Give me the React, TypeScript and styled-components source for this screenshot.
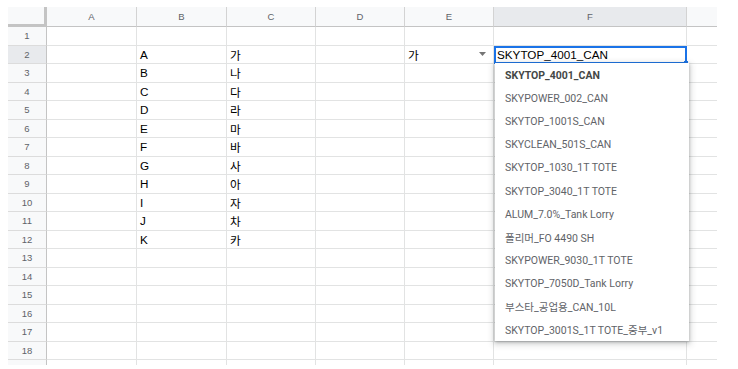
import React from "react";
import styled, { createGlobalStyle } from "styled-components";

const COLUMNS = ["A", "B", "C", "D", "E", "F", "G"];
const ROW_COUNT = 19;
const VISIBLE_COLS = 6;
const VISIBLE_ROWS = 18;

const latin = ["A", "B", "C", "D", "E", "F", "G", "H", "I", "J", "K"];
const hangul = ["가", "나", "다", "라", "마", "바", "사", "아", "자", "차", "카"];

const options = [
  "SKYTOP_4001_CAN",
  "SKYPOWER_002_CAN",
  "SKYTOP_1001S_CAN",
  "SKYCLEAN_501S_CAN",
  "SKYTOP_1030_1T TOTE",
  "SKYTOP_3040_1T TOTE",
  "ALUM_7.0%_Tank Lorry",
  "폴리머_FO 4490 SH",
  "SKYPOWER_9030_1T TOTE",
  "SKYTOP_7050D_Tank Lorry",
  "부스타_공업용_CAN_10L",
  "SKYTOP_3001S_1T TOTE_중부_v1",
];

const GlobalStyle = createGlobalStyle`
  html, body {
    margin: 0;
    padding: 0;
    background: #ffffff;
  }
`;

const Viewport = styled.div`
  margin: 7px 0 0 8px;
  width: 709px;
  height: 358px;
  overflow: hidden;
  position: relative;
`;

const Sheet = styled.div`
  display: grid;
  grid-template-columns: 39px 90px 90px 89px 89px 89px 193px 90px;
  grid-template-rows: 20px;
  grid-auto-rows: 18.5px;
  font-family: "Liberation Sans", "Noto Sans CJK KR", sans-serif;
`;

const Corner = styled.div`
  box-sizing: border-box;
  background: #f8f9fa;
  border-right: 3px solid #c4c4c4;
  border-bottom: 3px solid #c4c4c4;
`;

const ColHeader = styled.div<{ $active?: boolean }>`
  box-sizing: border-box;
  display: flex;
  align-items: center;
  justify-content: center;
  background: ${(p) => (p.$active ? "#e8eaed" : "#f8f9fa")};
  border-right: 1px solid #d3d3d3;
  border-bottom: 1px solid #c4c4c4;
  color: #5f6368;
  font-size: 9.5px;
`;

const RowHeader = styled.div<{ $active?: boolean }>`
  box-sizing: border-box;
  display: flex;
  align-items: center;
  justify-content: center;
  background: ${(p) => (p.$active ? "#e8eaed" : "#f8f9fa")};
  border-right: 1px solid #c4c4c4;
  border-bottom: 1px solid #dcdcdc;
  color: #5f6368;
  font-size: 9.5px;
`;

const Cell = styled.div`
  box-sizing: border-box;
  display: flex;
  align-items: center;
  justify-content: space-between;
  padding: 0 7px 0 3px;
  border-right: 1px solid #e2e3e3;
  border-bottom: 1px solid #e2e3e3;
  color: #000000;
  font-size: 11.7px;
  white-space: nowrap;
  overflow: hidden;
`;

const EditorCell = styled.div`
  box-sizing: border-box;
  position: relative;
  z-index: 2;
  display: flex;
  align-items: center;
  padding: 0 1px;
  border: 2px solid #1a73e8;
  color: #000000;
  font-size: 11.7px;
  white-space: nowrap;
  background: #ffffff;
`;

const Handle = styled.span`
  position: absolute;
  right: -3px;
  bottom: -3px;
  width: 4px;
  height: 4px;
  background: #1a73e8;
`;

const Menu = styled.div`
  position: absolute;
  top: calc(100% + 1px);
  left: -1px;
  width: 194px;
  padding-top: 1px;
  background: #ffffff;
  box-shadow: 0 2px 6px 2px rgba(60, 64, 67, 0.18), 0 1px 3px rgba(60, 64, 67, 0.35);
  font-family: Roboto, "Noto Sans CJK KR", sans-serif;
`;

const MenuItem = styled.div<{ $current?: boolean }>`
  height: 23.1px;
  display: flex;
  align-items: center;
  padding-left: 10px;
  font-size: 10.5px;
  color: ${(p) => (p.$current ? "#444746" : "#5f6368")};
  font-weight: ${(p) => (p.$current ? 700 : 400)};
`;

const Arrow = () => (
  <svg width="7" height="4" viewBox="0 0 7 4">
    <path d="M0 0h7L3.5 4z" fill="#757575" />
  </svg>
);

function cellContent(row: number, col: string) {
  const i = row - 2;
  if (col === "B" && i >= 0 && i < latin.length) return latin[i];
  if (col === "C" && i >= 0 && i < hangul.length) return hangul[i];
  if (col === "E" && row === 2)
    return (
      <>
        <span>가</span>
        <Arrow />
      </>
    );
  return null;
}

export default function App() {
  const rows = Array.from({ length: ROW_COUNT }, (_, i) => i + 1);

  return (
    <>
      <GlobalStyle />
      <Viewport>
        <Sheet>
          <Corner />
          {COLUMNS.map((c, ci) => (
            <ColHeader key={c} $active={c === "F"}>
              {ci < VISIBLE_COLS ? c : null}
            </ColHeader>
          ))}
          {rows.map((r) => (
            <React.Fragment key={r}>
              <RowHeader $active={r === 2}>{r <= VISIBLE_ROWS ? r : null}</RowHeader>
              {COLUMNS.map((c) =>
                r === 2 && c === "F" ? (
                  <EditorCell key={c}>
                    SKYTOP_4001_CAN
                    <Handle />
                    <Menu>
                      {options.map((o, idx) => (
                        <MenuItem key={o} $current={idx === 0}>
                          {o}
                        </MenuItem>
                      ))}
                    </Menu>
                  </EditorCell>
                ) : (
                  <Cell key={c}>{cellContent(r, c)}</Cell>
                )
              )}
            </React.Fragment>
          ))}
        </Sheet>
      </Viewport>
    </>
  );
}
